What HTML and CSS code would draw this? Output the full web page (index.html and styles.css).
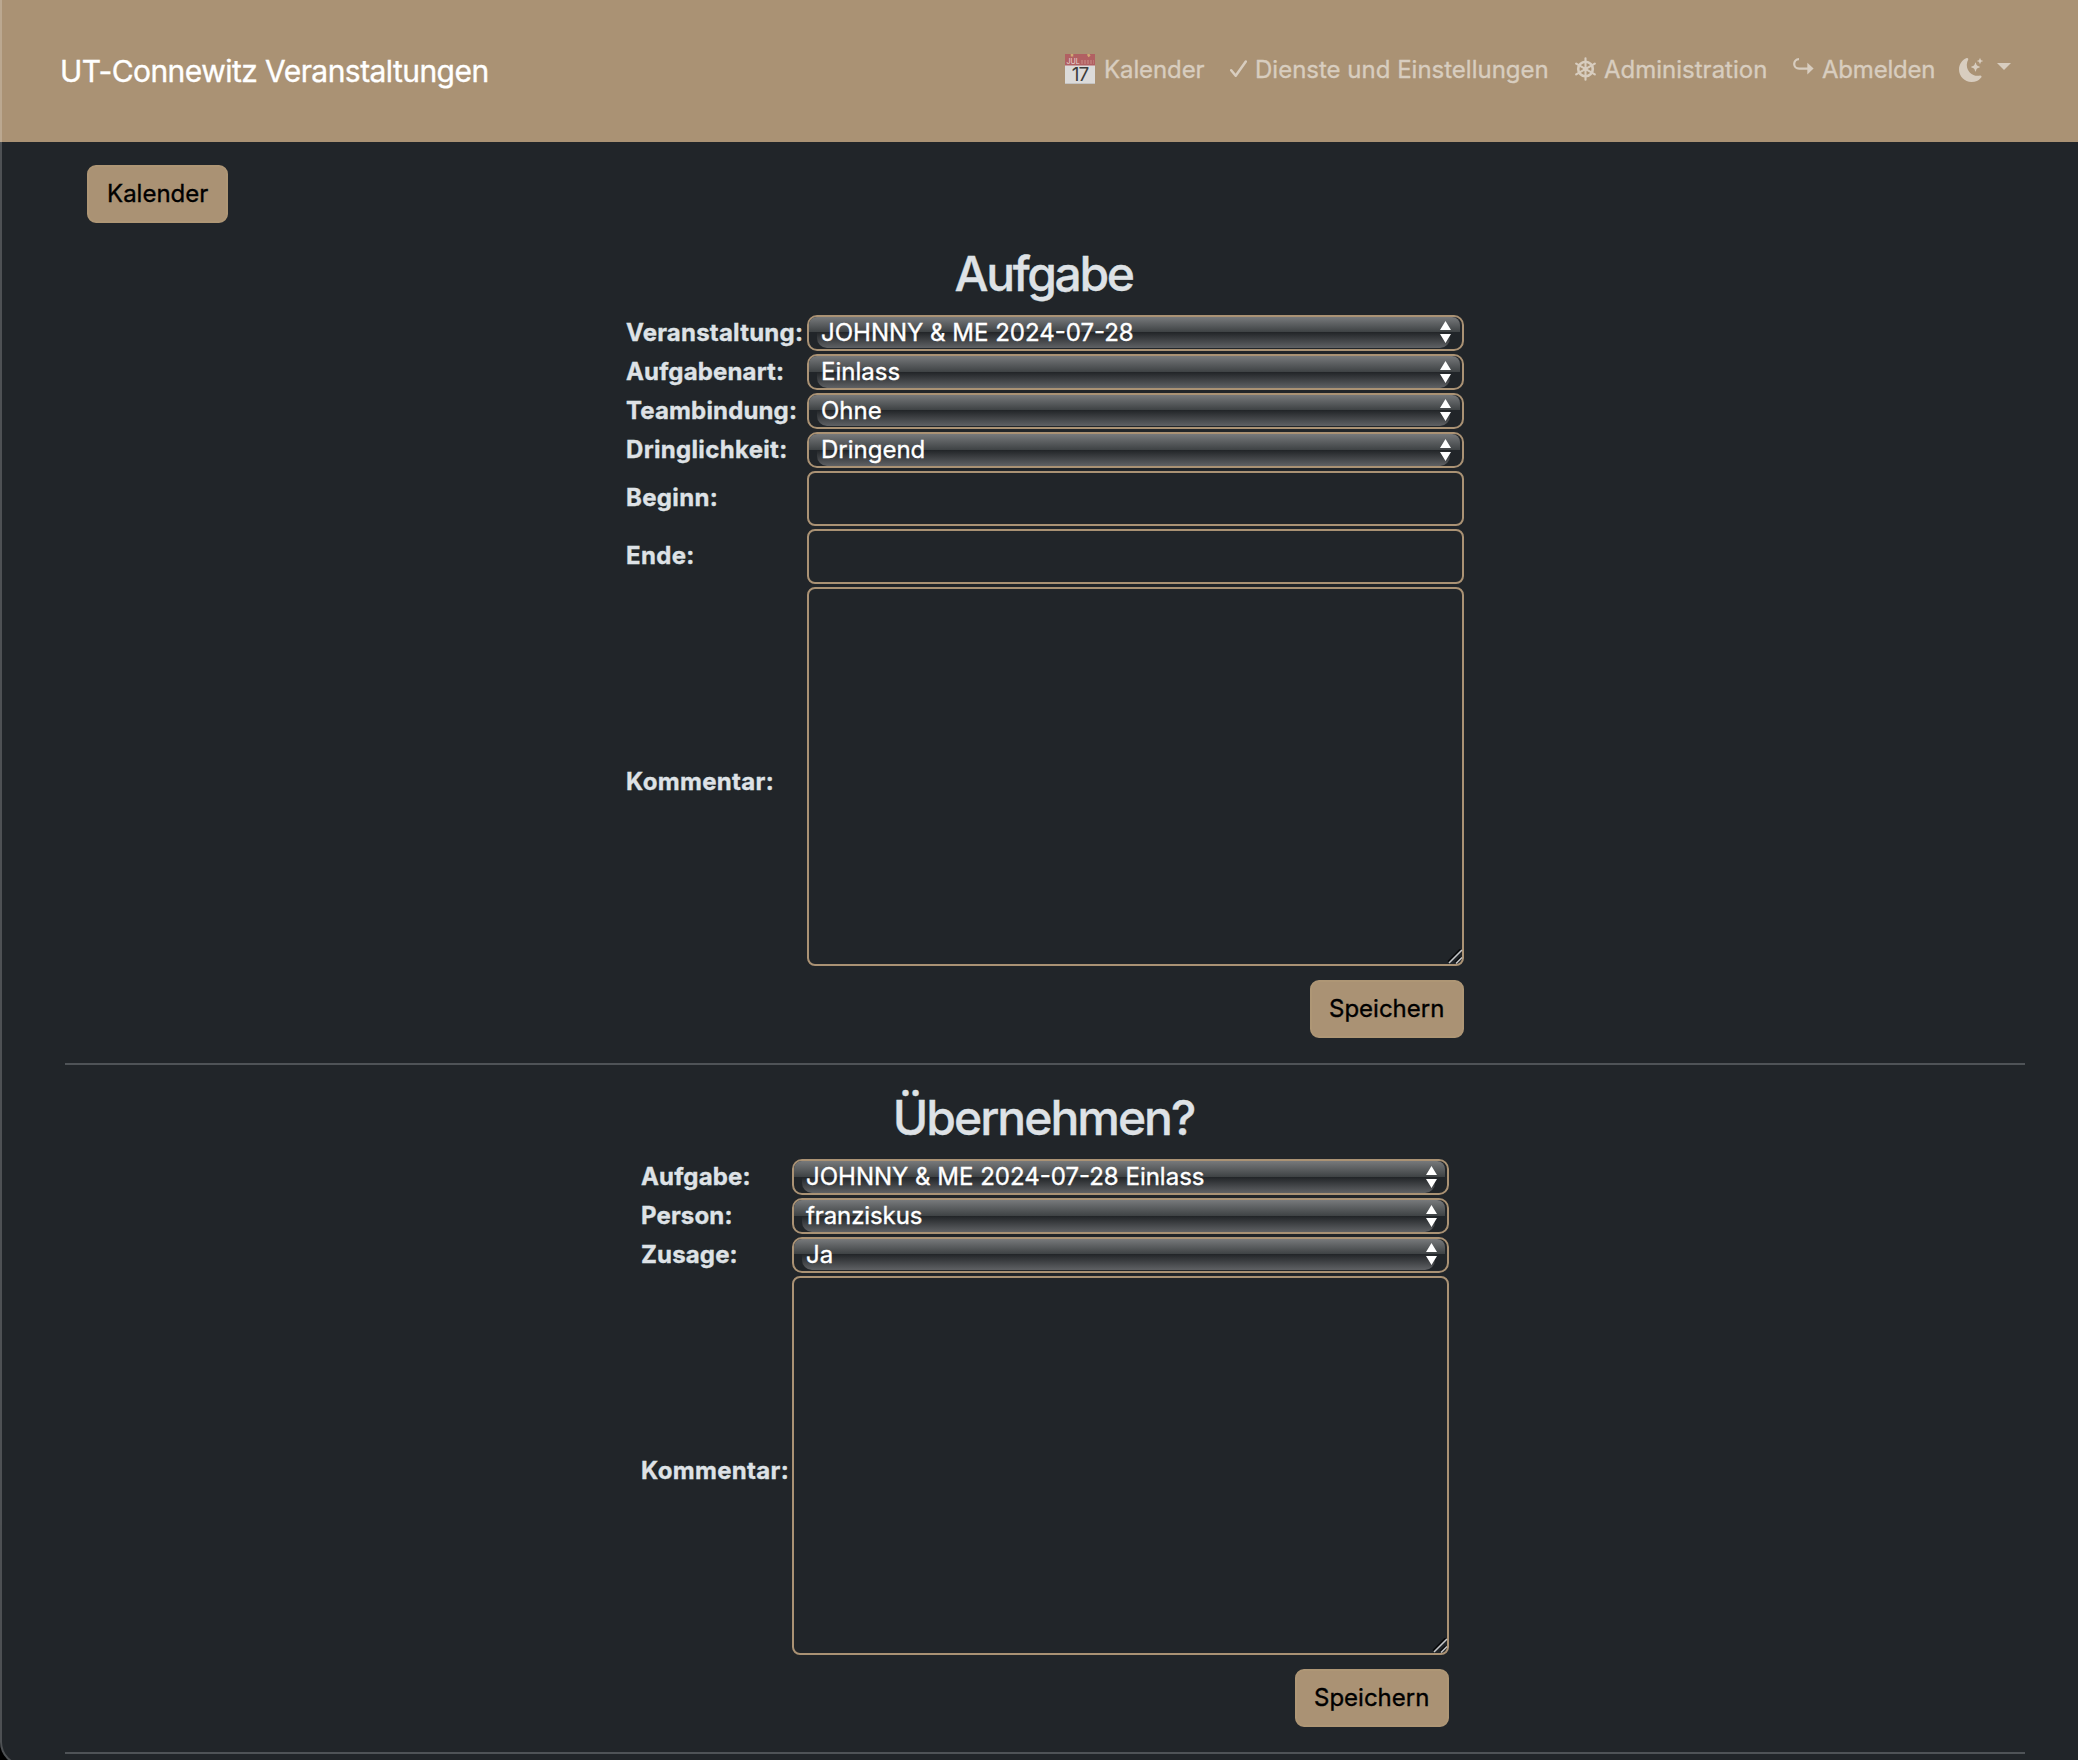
FILE: index.html
```html
<!DOCTYPE html>
<html lang="de">
<head>
<meta charset="utf-8">
<title>UT-Connewitz Veranstaltungen</title>
<link rel="stylesheet" href="styles.css">
</head>
<body>
<header class="navbar">
  <a class="brand">UT-Connewitz Veranstaltungen</a>
  <nav class="nav">
    <a class="nav-link">
      <svg class="ico-cal" width="30" height="30" viewBox="0 0 30 30">
        <rect width="30" height="30" fill="#dcdbda"/>
        <rect width="30" height="11.5" fill="#b16062"/>
        <path d="M7 0v2.500M23 0l1.500 2.500" stroke="#cfaa73" stroke-width="2.500"/>
        <path d="M16 8h13" stroke="#bd7775" stroke-width="4" stroke-dasharray="2 1"/>
        <text x="1.500" y="10.400" class="cal-month">JUL</text>
        <text x="15" y="27" class="cal-day" text-anchor="middle">17</text>
        <path d="M0 29.500h30" stroke="#c4c3c2"/>
      </svg>
      <span class="t-kal">Kalender</span>
    </a>
    <a class="nav-link">
      <svg class="ico-check" width="17" height="18" viewBox="0 0 17 18"><path d="M1.200 10.300L5.700 15.800L15.800 1.500" fill="none" stroke="currentColor" stroke-width="2.500" stroke-linecap="round" stroke-linejoin="round"/></svg>
      <span>Dienste und Einstellungen</span>
    </a>
    <a class="nav-link">
      <svg class="ico-wheel" width="21" height="24" viewBox="0 0 21 24">
        <g fill="none" stroke="currentColor" stroke-linecap="round">
          <circle cx="10.500" cy="12" r="7.300" stroke-width="2.600"/>
          <path d="M10.500 1.200v21.600M1.200 6.600l18.600 10.800M19.800 6.600l-18.600 10.800" stroke-width="2.100"/>
        </g>
        <circle cx="10.500" cy="12" r="2.300" fill="currentColor"/>
      </svg>
      <span>Administration</span>
    </a>
    <a class="nav-link">
      <svg class="ico-arrow" width="21" height="17" viewBox="0 0 21 17">
        <path d="M6 1.200C2.800 1.200 1.200 3.400 1.200 6s1.900 4.600 5 4.600H15" fill="none" stroke="currentColor" stroke-width="2.200"/>
        <path d="M14.300 4.800L20.600 10.600L14.300 16.400z" fill="currentColor"/>
      </svg>
      <span class="t-abm">Abmelden</span>
    </a>
    <a class="nav-link theme">
      <svg class="ico-moon" width="24" height="24" viewBox="0 0 16 16" fill="currentColor">
        <path d="M6 .278a.77.77 0 0 1 .08.858 7.200 7.200 0 0 0-.878 3.460c0 4.021 3.278 7.277 7.318 7.277q.792-.001 1.533-.160a.79.79 0 0 1 .810.316.73.73 0 0 1-.031.893A8.350 8.350 0 0 1 8.344 16C3.734 16 0 12.286 0 7.710 0 4.266 2.114 1.312 5.124.060A.75.75 0 0 1 6 .278"/>
        <path d="M10.794 3.148a.217.217 0 0 1 .412 0l.387 1.162c.173.518.579.924 1.097 1.097l1.162.387a.217.217 0 0 1 0 .412l-1.162.387a1.730 1.730 0 0 0-1.097 1.097l-.387 1.162a.217.217 0 0 1-.412 0l-.387-1.162A1.730 1.730 0 0 0 9.310 6.593l-1.162-.387a.217.217 0 0 1 0-.412l1.162-.387a1.730 1.730 0 0 0 1.097-1.097zM13.863.099a.145.145 0 0 1 .274 0l.258.774c.115.346.386.617.732.732l.774.258a.145.145 0 0 1 0 .274l-.774.258a1.160 1.160 0 0 0-.732.732l-.258.774a.145.145 0 0 1-.274 0l-.258-.774a1.160 1.160 0 0 0-.732-.732l-.774-.258a.145.145 0 0 1 0-.274l.774-.258c.346-.115.617-.386.732-.732z"/>
      </svg>
      <span class="caret"></span>
    </a>
  </nav>
</header>

<main class="content">
  <a class="btn btn-back">Kalender</a>

  <section class="panel">
    <h1 class="title title-task">Aufgabe</h1>
    <form class="form form-task">
      <label class="l1">Veranstaltung:</label>
      <div class="select"><span>JOHNNY &amp; ME 2024-07-28</span><i class="arrows"></i></div>
      <label class="l2">Aufgabenart:</label>
      <div class="select low"><span>Einlass</span><i class="arrows"></i></div>
      <label class="l2">Teambindung:</label>
      <div class="select"><span>Ohne</span><i class="arrows"></i></div>
      <label class="l3">Dringlichkeit:</label>
      <div class="select low"><span>Dringend</span><i class="arrows"></i></div>
      <label class="l3 up">Beginn:</label>
      <input class="input" type="text">
      <label class="l3 up">Ende:</label>
      <input class="input" type="text">
      <label class="l3">Kommentar:</label>
      <div class="area"><div class="textarea"><svg class="grip" width="16" height="16" viewBox="0 0 16 16"><path d="M1 12.500L13.500 0M8 13.500L13.500 8" stroke="#08090b" stroke-width="1.500"/><path d="M2 14L15 1M9 14.500L15 8.500" stroke="#c5c6c8" stroke-width="1.500"/></svg></div></div>
      <button type="button" class="btn save">Speichern</button>
    </form>
  </section>

  <hr class="rule">

  <section class="panel">
    <h1 class="title title-accept">Übernehmen?</h1>
    <form class="form form-accept">
      <label class="l2">Aufgabe:</label>
      <div class="select low"><span>JOHNNY &amp; ME 2024-07-28 Einlass</span><i class="arrows"></i></div>
      <label class="l2">Person:</label>
      <div class="select low"><span class="t-fran">franziskus</span><i class="arrows"></i></div>
      <label class="l2">Zusage:</label>
      <div class="select"><span>Ja</span><i class="arrows"></i></div>
      <label class="l3">Kommentar:</label>
      <div class="area"><div class="textarea"><svg class="grip" width="16" height="16" viewBox="0 0 16 16"><path d="M1 12.500L13.500 0M8 13.500L13.500 8" stroke="#08090b" stroke-width="1.500"/><path d="M2 14L15 1M9 14.500L15 8.500" stroke="#c5c6c8" stroke-width="1.500"/></svg></div></div>
      <button type="button" class="btn save">Speichern</button>
    </form>
  </section>

  <hr class="rule">
</main>
<div class="window-edge"></div>
</body>
</html>
```
FILE: styles.css
```css
* { box-sizing: border-box; }

html { overflow: hidden; }

body {
  position: relative;
  height: 1760px;
  margin: 0;
  overflow: hidden;
  background: #212529;
  color: #dee2e6;
  font: 400 24px/36px Inter, "Liberation Sans", sans-serif;
  -webkit-text-stroke: 0.35px currentColor;
}

/* Navigation */
.navbar {
  display: flex;
  align-items: center;
  justify-content: space-between;
  height: 142px;
  padding: 0 67px 0 60px;
  background: #aa9274;
}
.brand {
  color: #fff;
  font-size: 30px;
  letter-spacing: -0.55px;
}
.nav {
  display: grid;
  grid-template-columns: 165px 345px 218px 166px 52px;
  margin-bottom: 3px;
}
.nav-link {
  display: flex;
  align-items: center;
  gap: 8px;
  color: #d8cdbf;
  white-space: nowrap;
}
.ico-cal,
.ico-check,
.ico-wheel { margin-bottom: 2px; }
.ico-arrow { margin-bottom: 6px; }
.t-kal { margin-left: 1px; letter-spacing: -0.1px; }
.t-abm { letter-spacing: -0.2px; }
.theme { gap: 14px; }
.cal-month { font-size: 7px; fill: #ead6d5; -webkit-text-stroke: 0; }
.cal-day { font-size: 19px; letter-spacing: -1px; fill: #3d3d3d; -webkit-text-stroke: 0; }
.caret {
  margin-bottom: 6px;
  border: 7px solid transparent;
  border-top-color: currentColor;
  border-bottom: 0;
}

/* Layout */
.content { padding: 23px 53px 0 65px; }
.panel {
  display: flex;
  flex-direction: column;
  align-items: center;
}
.rule {
  height: 2px;
  margin: 25px 0 24px;
  border: 0;
  background: #4f5357;
}
.title {
  margin: 0 0 12px;
  padding-right: 3px;
  font-size: 48px;
  font-weight: 500;
  line-height: 58px;
}
.title-task { letter-spacing: -2.4px; }
.title-accept { letter-spacing: -2px; }

/* Buttons */
.btn {
  display: block;
  height: 58px;
  padding: 0 18px;
  border: 2px solid #ae9675;
  border-radius: 9px;
  background: #aa9274;
  color: #000;
  font: inherit;
  line-height: 54px;
  text-align: center;
}
.btn-back { width: 141px; margin: 0 0 22px 22px; }
.save {
  grid-column: 2;
  justify-self: end;
  width: 154px;
  margin-top: 1px;
  padding: 0 19px 0 17px;
}

/* Forms */
.form {
  display: grid;
  gap: 3px 4px;
  align-items: center;
}
.form-task { grid-template-columns: 177px 657px; }
.form-accept { grid-template-columns: 147px 657px; }
label { font-weight: 700; white-space: nowrap; }
.l1 { letter-spacing: 0.22px; }
.l2 { letter-spacing: 0.15px; }
.l3 { letter-spacing: 0.33px; }
.up { padding-bottom: 2px; }

.select {
  position: relative;
  height: 36px;
  padding-left: 12px;
  border: 2px solid #aa9274;
  border-radius: 10px;
  color: #fff;
  line-height: 32px;
}
.select span { position: relative; z-index: 1; }
.select::before,
.select::after {
  content: "";
  position: absolute;
}
.select::before {
  inset: 0 2px auto 0;
  height: 15px;
  border-radius: 8px 8px 0 0;
  background: linear-gradient(#77797b, #3e4244);
}
.select::after {
  inset: 15px 12px 1px 8px;
  border-radius: 0 0 10px 10px;
  background: linear-gradient(#212427, #5f6164);
}
.select.low::before { height: 16px; }
.select.low::after { top: 16px; bottom: 0; }
.arrows {
  position: absolute;
  z-index: 1;
  top: 4px;
  right: 11px;
  width: 11px;
  height: 22px;
  background: #fff;
  clip-path: polygon(50% 0, 100% 41%, 0 41%, 50% 0, 0 59%, 100% 59%, 50% 100%, 0 59%);
}
.low .arrows { top: 5px; }
.form-accept .arrows { right: 10px; }
.t-fran { letter-spacing: -0.1px; }

.input {
  width: 657px;
  height: 55px;
  padding: 0 18px;
  border: 2px solid #aa9274;
  border-radius: 8px;
  background: transparent;
  color: inherit;
  font: inherit;
}
.area { height: 389px; }
.textarea {
  position: relative;
  height: 379px;
  border: 2px solid #aa9274;
  border-radius: 8px;
}
.grip { position: absolute; right: -1px; bottom: -1px; }

/* Window outline on the left with its rounded corner */
.window-edge {
  position: absolute;
  top: -30px;
  left: 0;
  width: 100%;
  height: 1796px;
  border-left: 2px solid rgba(255, 255, 255, 0.2);
  border-bottom: 2px solid rgba(255, 255, 255, 0.2);
  border-bottom-left-radius: 24px;
  box-shadow: 0 0 0 30px #000;
  pointer-events: none;
}
```
